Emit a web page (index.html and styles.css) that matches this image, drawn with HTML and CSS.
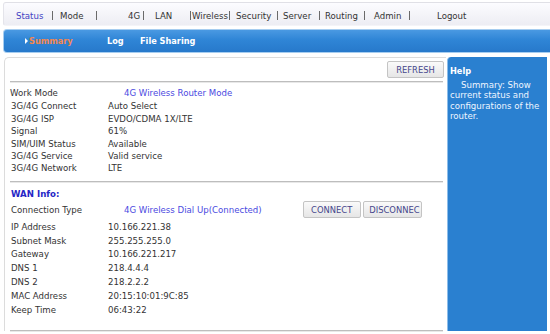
FILE: index.html
```html
<!DOCTYPE html>
<html>
<head>
<meta charset="utf-8">
<title>Status - Summary</title>
<link rel="stylesheet" href="styles.css">
</head>
<body>
<nav class="topnav">
  <a class="nav-item active">Status</a><span class="nav-sep"></span>
  <a class="nav-item">Mode</a><span class="nav-sep"></span>
  <a class="nav-item">4G</a><span class="nav-sep"></span>
  <a class="nav-item">LAN</a><span class="nav-sep"></span>
  <a class="nav-item">Wireless</a><span class="nav-sep"></span>
  <a class="nav-item">Security</a><span class="nav-sep"></span>
  <a class="nav-item">Server</a><span class="nav-sep"></span>
  <a class="nav-item">Routing</a><span class="nav-sep"></span>
  <a class="nav-item">Admin</a><span class="nav-sep"></span>
  <a class="nav-item">Logout</a>
</nav>
<div class="tabbar">
  <a class="tab current"><span class="tab-arrow"></span>Summary</a>
  <a class="tab">Log</a>
  <a class="tab">File Sharing</a>
</div>
<main class="main">
  <section class="content">
    <div class="toolbar">
      <button class="btn">REFRESH</button>
    </div>
    <div class="rule"></div>
    <div class="info info-status">
      <div class="row first"><span class="label label-first">Work Mode</span><span class="value hl">4G Wireless Router Mode</span></div>
      <div class="row"><span class="label">3G/4G Connect</span><span class="value">Auto Select</span></div>
      <div class="row"><span class="label">3G/4G ISP</span><span class="value">EVDO/CDMA 1X/LTE</span></div>
      <div class="row"><span class="label">Signal</span><span class="value">61%</span></div>
      <div class="row"><span class="label">SIM/UIM Status</span><span class="value">Available</span></div>
      <div class="row"><span class="label">3G/4G Service</span><span class="value">Valid service</span></div>
      <div class="row"><span class="label">3G/4G Network</span><span class="value">LTE</span></div>
    </div>
    <div class="rule"></div>
    <div class="info info-wan">
      <div class="row heading"><span class="section-title">WAN Info:</span></div>
      <div class="row conn"><span class="label">Connection Type</span><span class="value hl conn-value">4G Wireless Dial Up(Connected)</span><button class="btn btn-connect">CONNECT</button><button class="btn btn-disconnect">DISCONNEC</button></div>
      <div class="wan-list">
        <div class="row wide"><span class="label">IP Address</span><span class="value">10.166.221.38</span></div>
        <div class="row wide"><span class="label">Subnet Mask</span><span class="value">255.255.255.0</span></div>
        <div class="row wide"><span class="label">Gateway</span><span class="value">10.166.221.217</span></div>
        <div class="row wide"><span class="label">DNS 1</span><span class="value">218.4.4.4</span></div>
        <div class="row wide"><span class="label">DNS 2</span><span class="value">218.2.2.2</span></div>
        <div class="row wide"><span class="label">MAC Address</span><span class="value">20:15:10:01:9C:85</span></div>
        <div class="row wide"><span class="label">Keep Time</span><span class="value">06:43:22</span></div>
      </div>
    </div>
    <div class="rule"></div>
  </section>
  <aside class="help">
    <div class="help-title">Help</div>
    <p class="help-text">Summary: Show current status and configurations of the router.</p>
  </aside>
</main>
</body>
</html>
```
FILE: styles.css
```css
* { box-sizing: border-box; }

html, body {
  margin: 0;
  padding: 0;
  background: #ffffff;
}

body {
  width: 550px;
  height: 334px;
  overflow: hidden;
  font-family: "DejaVu Sans", Verdana, sans-serif;
  font-size: 8.6px;
  color: #333333;
}

/* ---------- top navigation ---------- */
.topnav {
  margin: 2px 0 0 3px;
  height: 24px;
  padding-top: 3px;
  display: grid;
  grid-template-columns: 48px 1px 43px 1px 46px 1px 46px 1px 38px 1px 47px 1px 41px 1px 44px 1px 44px 1px 1fr;
  align-items: center;
  background: linear-gradient(#fcfcff, #ededf3);
  border-top: 1px solid #e0e0e6;
  border-left: 1px solid #e4e4ea;
  border-bottom: 1px solid #f4f4f8;
  border-radius: 3px 0 0 3px;
}

.nav-item {
  color: #333333;
  white-space: nowrap;
}

.nav-item.active { color: #4343c4; }

.nav-sep {
  height: 9px;
  background: #6a6a6a;
}

.topnav > :nth-child(1)  { padding-left: 12px; }
.topnav > :nth-child(3)  { padding-left: 7px; }
.topnav > :nth-child(5)  { padding-left: 31px; }
.topnav > :nth-child(7)  { padding-left: 11px; }
.topnav > :nth-child(9)  { padding-left: 1px; }
.topnav > :nth-child(11) { padding-left: 6px; }
.topnav > :nth-child(13) { padding-left: 5px; }
.topnav > :nth-child(15) { padding-left: 5px; }
.topnav > :nth-child(17) { padding-left: 9px; }
.topnav > :nth-child(19) { padding-left: 27px; }

/* ---------- blue tab bar ---------- */
.tabbar {
  margin: 3px 0 0 3px;
  height: 24px;
  padding-left: 21px;
  display: grid;
  grid-template-columns: 82px 33px auto;
  align-items: center;
  background: linear-gradient(#4a99e2, #2f85d6 45%, #2779cb);
  border: 1px solid #a6cdf0;
  border-right: none;
  border-radius: 4px 0 0 4px;
  font-size: 8.2px;
  font-weight: bold;
}

.tab {
  color: #ffffff;
  white-space: nowrap;
}

.tab.current { color: #f5874f; }

.tab-arrow {
  display: inline-block;
  width: 0;
  height: 0;
  margin-right: 1px;
  vertical-align: 0;
  border-left: 3px solid #ffffff;
  border-top: 3px solid transparent;
  border-bottom: 3px solid transparent;
}

/* ---------- main area ---------- */
.main {
  display: flex;
  margin-top: 4px;
}

.content {
  margin-left: 4px;
  width: 442px;
  height: 274px;
  border-top: 1px solid #dcdcdc;
  border-left: 1px solid #dcdcdc;
  border-radius: 5px 0 0 0;
}

.toolbar {
  height: 23px;
  padding-top: 3px;
  padding-right: 2px;
  display: flex;
  justify-content: flex-end;
  align-items: flex-start;
}

.btn {
  height: 17px;
  padding: 0;
  font-family: "DejaVu Sans", Verdana, sans-serif;
  font-size: 8.4px;
  color: #46468c;
  background: linear-gradient(#fafafa, #e6e6e6);
  border: 1px solid #c4c4c4;
  border-radius: 2px;
  white-space: nowrap;
  overflow: hidden;
}

.toolbar .btn { width: 57px; }

.rule {
  margin: 0 3px 0 5px;
  height: 2px;
  border-top: 1px solid #bdbdbd;
  border-bottom: 1px solid #e8e8e8;
}

.info { padding-left: 6px; }

.info-status {
  padding-top: 3.3px;
  padding-bottom: 6px;
}

.info-wan {
  padding-top: 5.3px;
  padding-bottom: 13.9px;
}

.row {
  display: flex;
  align-items: center;
  height: 12.4px;
  white-space: nowrap;
}

.row.first { height: 14px; }
.row.heading { height: 13px; }
.row.conn { height: 18px; }
.row.wide { height: 13.8px; }

.wan-list { margin-top: 1px; }

.label {
  width: 97px;
  flex: none;
}

.label-first { margin-left: -1px; width: 98px; }

.value { color: #333333; }

.value.hl {
  color: #4a4adf;
  padding-left: 16px;
}

.conn-value {
  width: 194.7px;
  flex: none;
}

.section-title {
  color: #2626c6;
  font-weight: bold;
}

.btn-connect { width: 58px; }

.btn-disconnect {
  width: 59px;
  margin-left: 2.6px;
  padding-left: 5px;
  text-align: left;
}

/* ---------- help panel ---------- */
.help {
  margin-left: 1px;
  width: 100px;
  height: 274px;
  padding: 9px 3px 0 2px;
  background: #2a80d0;
  border-left: 1px solid #8dbde9;
  border-radius: 4px 0 0 0;
  color: #eef5ff;
}

.help-title {
  font-size: 8.2px;
  font-weight: bold;
  line-height: 11px;
  color: #ffffff;
}

.help-text {
  margin: 3px 0 0 0;
  line-height: 10.3px;
  text-indent: 11px;
}
```
